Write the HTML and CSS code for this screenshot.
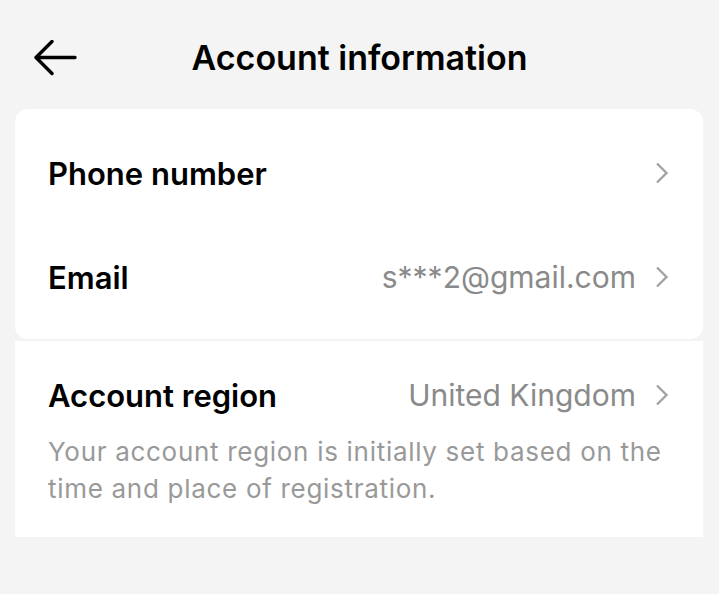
FILE: index.html
```html
<!DOCTYPE html>
<html lang="en">
<head>
<meta charset="utf-8">
<title>Account information</title>
<link rel="stylesheet" href="styles.css">
</head>
<body>
<header class="topbar">
  <div class="back">
    <svg width="44" height="36" viewBox="0 0 44 36" aria-hidden="true">
      <path d="M42 17.5 H3 M19 1.5 L3 17.5 L19 33.5" fill="none" stroke="#000" stroke-width="3.4" stroke-linecap="round" stroke-linejoin="round"/>
    </svg>
  </div>
  <h1 class="title">Account information</h1>
  <div></div>
</header>

<section class="card card-top">
  <div class="row">
    <span class="label">Phone number</span>
    <span class="value"></span>
    <svg class="chev" width="14" height="22" viewBox="0 0 14 22" aria-hidden="true"><path d="M2 1.5 L11.5 11 L2 20.5" fill="none" stroke="#a3a3a3" stroke-width="2.4"/></svg>
  </div>
  <div class="row">
    <span class="label">Email</span>
    <span class="value">s***2@gmail.com</span>
    <svg class="chev" width="14" height="22" viewBox="0 0 14 22" aria-hidden="true"><path d="M2 1.5 L11.5 11 L2 20.5" fill="none" stroke="#a3a3a3" stroke-width="2.4"/></svg>
  </div>
</section>

<section class="card card-bottom">
  <div class="row row-region">
    <span class="label">Account region</span>
    <span class="value">United Kingdom</span>
    <svg class="chev" width="14" height="22" viewBox="0 0 14 22" aria-hidden="true"><path d="M2 1.5 L11.5 11 L2 20.5" fill="none" stroke="#a3a3a3" stroke-width="2.4"/></svg>
  </div>
  <p class="note">Your account region is initially set based on the time and place of registration.</p>
</section>
</body>
</html>
```

FILE: styles.css
```css
* { box-sizing: border-box; }
html, body { margin: 0; padding: 0; }
body {
  background: #f4f4f4;
  font-family: Inter, "Liberation Sans", Arial, sans-serif;
  color: #000;
  width: 719px;
  height: 594px;
  overflow: hidden;
}
.topbar {
  display: grid;
  grid-template-columns: 1fr auto 1fr;
  align-items: center;
  height: 109px;
  padding-top: 30px;
  padding-bottom: 24px;
}
.back { padding-left: 33px; display: flex; align-items: center; }
.back svg { display: block; }
.title {
  margin: 0;
  font-size: 34px;
  font-weight: 600;
}
.card {
  background: #fff;
  margin: 0 16px 0 15px;
}
.card-top {
  border-radius: 13px;
  padding: 12px 0 10px;
}
.card-bottom {
  margin-top: 2px;
  padding: 16px 0 30px;
}
.row {
  display: flex;
  align-items: center;
  height: 104px;
  padding: 0 34px 0 33px;
}
.row-region { height: 76px; }
.label {
  font-size: 31px;
  font-weight: 600;
  flex: 1;
}
.value {
  font-size: 30px;
  color: #8a8a8a;
  margin-right: 19px;
}
.chev { display: block; flex: none; }
.note {
  margin: 0;
  padding: 0 30px 0 33px;
  font-size: 26px;
  letter-spacing: 0.7px;
  line-height: 37px;
  color: #999;
}
```
